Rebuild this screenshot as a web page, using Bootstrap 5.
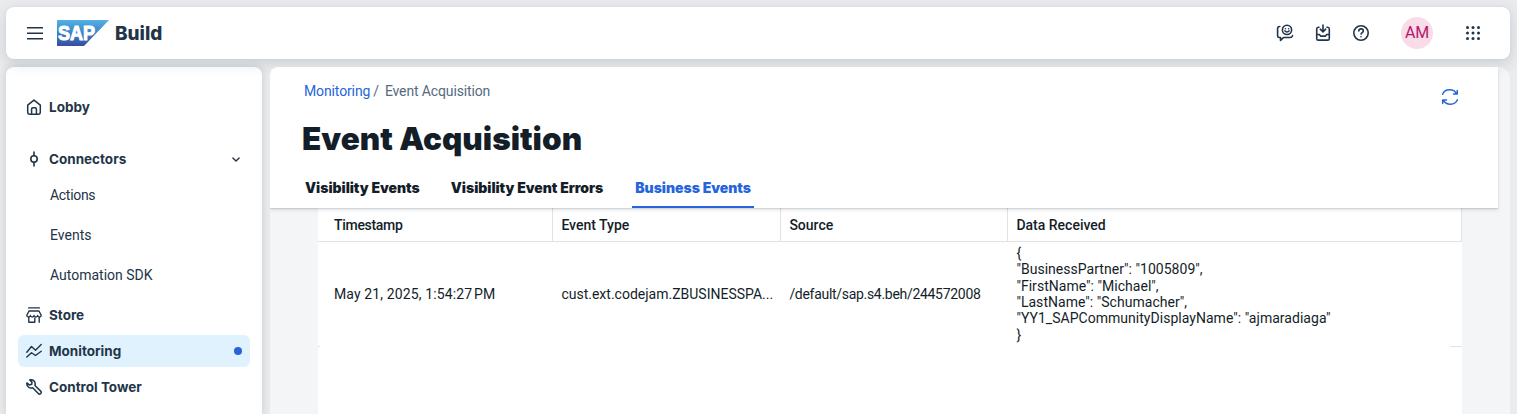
<!DOCTYPE html>
<html lang="en">
<head>
<meta charset="utf-8">
<meta name="viewport" content="width=device-width, initial-scale=1">
<title>SAP Build - Monitoring</title>
<link href="https://cdn.jsdelivr.net/npm/bootstrap@5.3.0/dist/css/bootstrap.min.css" rel="stylesheet">
<style>
  html, body { height: 100%; }
  body { font: 14px/16px Roboto, "Liberation Sans", sans-serif; color: #223548; background: #eaebed; overflow: hidden; }
  svg { display: block; flex: none; }
  a { text-decoration: none; }
  .shell { padding: 7px 7px 0 6px; gap: 8px; }
  .shellbar { height: 52px; border-radius: 8px; box-shadow: 0 4px 14px rgba(34,53,72,.16), 0 0 2px rgba(34,53,72,.08); padding: 0 28px 0 20px; z-index: 1; flex: none; }
  .brand-logo { margin-left: 13px; }
  .product { font: 800 18.9px/24px Inter, sans-serif; margin: 2px 0 0 5px; }
  .tools { gap: 20px; }
  .avatar { width: 32px; height: 32px; background: #fadbe8; color: #b0186c; font-size: 16px; letter-spacing: -.3px; margin: 0 11px; }
  .sidenav { width: 256px; border-radius: 8px 8px 0 0; box-shadow: 0 0 8px rgba(34,53,72,.18); padding: 24px 12px 0; flex: none; }
  .side-item { height: 32px; padding: 0 8px; gap: 7px; border-radius: 6px; font: 700 13.5px/16px Inter, sans-serif; color: #223548; margin-bottom: 4px; }
  .side-item.first { margin-bottom: 20px; }
  .side-item.active { background: #e1f2ff; }
  .side-sub { height: 40px; padding-left: 32px; color: #223548; }
  .dot { width: 8px; height: 8px; background: #2764db; }
  .workarea { border-radius: 8px 12px 0 0; background: #f4f5f7; overflow: hidden; }
  .page-head { height: 141px; margin-right: 12px; background: #fff; box-shadow: 0 1px 1px rgba(0,0,0,.1), 0 2px 4px rgba(34,53,72,.12); padding: 16px 39px 0 32px; z-index: 1; }
  .crumbs { padding-left: 2px; color: #556b82; gap: 3px; letter-spacing: -.13px; }
  .crumbs .current { margin-left: 3px; }
  .crumbs a, .tab-link.active { color: #2764db; }
  .refresh { margin: 5px 0 -7px; }
  .page-title { font: 900 31.5px/40px Inter, sans-serif; color: #131e29; margin: 20px 0 0; letter-spacing: .02px; }
  .tab-bar { gap: 25px; margin: 17px 0 0; height: 32px; }
  .tab-link { font: 900 14px/18px Inter, sans-serif; color: #131e29; padding: 3px 3px 0; letter-spacing: -.03px; border-bottom: 2px solid transparent; }
  .tab-link.active { border-bottom-color: #2764db; margin-left: 1px; }
  .events { margin: 0 48px; background: #fff; color: #131e29; }
  .events-row { display: grid; grid-template-columns: 235px 228px 227px 1fr; }
  .events-head { height: 34px; border-bottom: 1px solid #e1e2e4; font-weight: 500; }
  .events-head > div { border-right: 1px solid #e1e2e4; padding: 9px 0 0 8.4px; }
  .events-head > div:first-child, .events-body > div:first-child { padding-left: 16px; }
  .events-body { height: 105px; align-items: center; padding-bottom: 1px; }
  .events-body > div { padding-left: 8.4px; }
  .tight { letter-spacing: -.3px; }
  .payload { line-height: 16.4px; white-space: pre; letter-spacing: .03px; }
  .row-end { height: 1px; margin-top: -1px; }
  .row-end span { background: #e1e2e4; height: 1px; }
</style>
</head>
<body>
<div class="shell d-flex flex-column h-100">
  <header class="shellbar bg-white d-flex align-items-center position-relative">
    <svg width="18" height="18" viewBox="0 0 18 18" stroke="#223548" stroke-width="1.5"><path d="M1 3.700h16M1 9.200h16M1 14.700h16"/></svg>
    <svg class="brand-logo" width="53" height="26" viewBox="0 0 53 26">
      <defs><linearGradient id="brand" x1="0" y1="0" x2="0" y2="1"><stop offset="0" stop-color="#53b1e4"/><stop offset=".5" stop-color="#3b84c8"/><stop offset="1" stop-color="#3a4c9e"/></linearGradient></defs>
      <path fill="url(#brand)" d="M0 0h52L27 26H0z"/>
      <text x="1" y="20.300" font-family="Liberation Sans, sans-serif" font-weight="700" font-size="20.500" fill="#fff" stroke="#fff" stroke-width="1.100" textLength="37" lengthAdjust="spacingAndGlyphs">SAP</text>
    </svg>
    <span class="product">Build</span>
    <div class="tools d-flex align-items-center ms-auto">
      <svg width="18" height="18" viewBox="0 0 18 18" fill="none" stroke="#223548" stroke-width="1.600" stroke-linecap="round" stroke-linejoin="round"><circle cx="11" cy="5.900" r="4.600"/><path d="M8.900 6.900c1 1.500 3.200 1.500 4.200 0M3.800 2.500C2.300 2.500 1.600 3.100 1.600 4.600V12c0 1 .6 1.500 1.700 1.500h1.200v2.900l3-2.900h6.700c1 0 1.900-.6 2.400-1.800"/><path d="M9.400 4.700v.1M12.600 4.700v.1"/></svg>
      <svg width="18" height="18" viewBox="-1 0 18 18" fill="none" stroke="#223548" stroke-width="1.600" stroke-linecap="round" stroke-linejoin="round"><path d="M4 3.200H3.300C2.200 3.200 1.700 3.800 1.700 4.900v9.500c0 1.100.5 1.700 1.600 1.700h9.400c1.100 0 1.600-.6 1.600-1.700V4.900c0-1.100-.5-1.700-1.600-1.700H12M8 1v6.600M5.300 5.200 8 7.800l2.700-2.600M1.700 10.500h2.600l1.300 1.600h4.800l1.300-1.600h2.600"/></svg>
      <svg width="18" height="18" viewBox="0 0 18 18" fill="none" stroke="#223548" stroke-width="1.600" stroke-linecap="round" stroke-linejoin="round"><circle cx="9" cy="9" r="7.200"/><path d="M6.800 7c.1-1.400 1-2.100 2.300-2.100s2.200.8 2.200 2c0 1.600-2.200 1.700-2.200 3.200M9 12.700v.1"/></svg>
      <div class="avatar rounded-circle d-flex align-items-center justify-content-center"><span>AM</span></div>
      <svg width="18" height="18" viewBox="0 0 18 18" fill="#223548"><g id="dots"><circle cx="3.500" cy="3.500" r="1.500"/><circle cx="9" cy="3.500" r="1.500"/><circle cx="14.500" cy="3.500" r="1.500"/></g><use href="#dots" y="5.500"/><use href="#dots" y="11"/></svg>
    </div>
  </header>

  <div class="d-flex flex-grow-1 gap-2">
    <nav class="sidenav bg-white" aria-label="Main">
      <a href="#" class="side-item first d-flex align-items-center">
        <svg width="16" height="16" viewBox="0 0 16 16" fill="none" stroke="#223548" stroke-width="1.500" stroke-linejoin="round"><path d="M1.700 6.200 8 1.100l6.300 5.100v6.700c0 1.600-.8 2.300-2 2.300H3.700c-1.200 0-2-.7-2-2.300z"/><path d="M5.600 15.200V10c0-.8.400-1.200 1.200-1.200h2.400c.8 0 1.200.400 1.200 1.200v5.200"/></svg>Lobby</a>
      <a href="#" class="side-item d-flex align-items-center mb-0">
        <svg width="16" height="16" viewBox="0 0 16 16" fill="none" stroke="#223548" stroke-width="1.600" stroke-linecap="round"><circle cx="8" cy="8" r="3.200"/><path d="M8 1v3.600M8 11.400V15"/></svg>Connectors
        <svg class="ms-auto me-1" style="margin-right:1px!important" width="10" height="10" viewBox="0 0 10 10" fill="none" stroke="#223548" stroke-width="1.400" stroke-linecap="round" stroke-linejoin="round"><path d="M1.900 4.100 5 7.100l3.100-3"/></svg></a>
      <a href="#" class="side-sub tight d-flex align-items-center">Actions</a>
      <a href="#" class="side-sub d-flex align-items-center">Events</a>
      <a href="#" class="side-sub d-flex align-items-center mb-1">Automation SDK</a>
      <a href="#" class="side-item d-flex align-items-center">
        <svg width="16" height="16" viewBox="0 0 16 16" fill="none" stroke="#223548" stroke-width="1.400" stroke-linejoin="round" stroke-linecap="round"><path d="M2.600.9h10.800M3 4h10l2.200 4.200c0 2.300-3.400 2.400-3.600.3-.2 2-3.400 2-3.600 0-.2 2-3.400 2-3.600 0C4.200 10.600.8 10.500.8 8.200zM2.800 10.200v5h6v-4M13.200 10.200v5"/></svg>Store</a>
      <a href="#" class="side-item active d-flex align-items-center">
        <svg width="16" height="16" viewBox="0 0 16 16" fill="none" stroke="#223548" stroke-width="1.400" stroke-linejoin="round" stroke-linecap="round"><path d="M.8 9.200 5.500 3.500l4 3.700 5.700-5.700M.8 14l4.700-4.300 4 2.800 5.700-4.300"/></svg>Monitoring<span class="dot rounded-circle ms-auto"></span></a>
      <a href="#" class="side-item d-flex align-items-center">
        <svg width="16" height="16" viewBox="0 0 16 16" fill="none" stroke="#223548" stroke-width="1.500" stroke-linejoin="round"><path d="M3.700 1C6.300.1 9.200 1.800 9.200 5c0 .6-.1 1-.3 1.500l5.800 5.600c.8.900.6 1.800.1 2.400-.7.700-1.800.7-2.500 0L6.700 8.800C3.500 9.900.3 7.200.9 3.900l2.400 2 2.400-.6.300-2.200z"/></svg>Control Tower</a>
    </nav>

    <main class="workarea flex-grow-1">
      <div class="page-head position-relative">
        <div class="d-flex justify-content-between">
          <div class="crumbs d-flex"><a href="#">Monitoring</a><span>/</span><span class="current">Event Acquisition</span></div>
          <svg class="refresh" width="18" height="18" viewBox="0 0 18 18" fill="none" stroke="#2764db" stroke-width="1.500" stroke-linecap="round" stroke-linejoin="round"><path d="M1.600 6.200C4 .4 12.500.3 15.600 5.600M16.300 2.600v3.400h-3.800M16.400 11.800c-2.400 5.800-10.900 5.900-14 .6M1.700 15.400V12h3.800"/></svg>
        </div>
        <h1 class="page-title">Event Acquisition</h1>
        <div class="tab-bar d-flex">
          <a href="#" class="tab-link">Visibility Events</a>
          <a href="#" class="tab-link">Visibility Event Errors</a>
          <a href="#" class="tab-link active">Business Events</a>
        </div>
      </div>
      <div class="events h-100">
        <div class="events-row events-head">
          <div class="tight">Timestamp</div><div>Event Type</div><div>Source</div><div>Data Received</div>
        </div>
        <div class="events-row events-body">
          <div style="letter-spacing:.12px">May 21, 2025, 1:54:27&#8239;PM</div>
          <div class="text-truncate">cust.ext.codejam.ZBUSINESSPA...</div>
          <div class="tight">/default/sap.s4.beh/244572008</div>
          <div class="payload">{
"BusinessPartner": "1005809",
"FirstName": "Michael",
"LastName": "Schumacher",
"YY1_SAPCommunityDisplayName": "ajmaradiaga"
}</div>
        </div>
        <div class="row-end d-flex justify-content-between"><span style="width:2px"></span><span style="width:12px"></span></div>
      </div>
    </main>
  </div>
</div>
<script src="https://cdn.jsdelivr.net/npm/bootstrap@5.3.0/dist/js/bootstrap.bundle.min.js"></script>
</body>
</html>
